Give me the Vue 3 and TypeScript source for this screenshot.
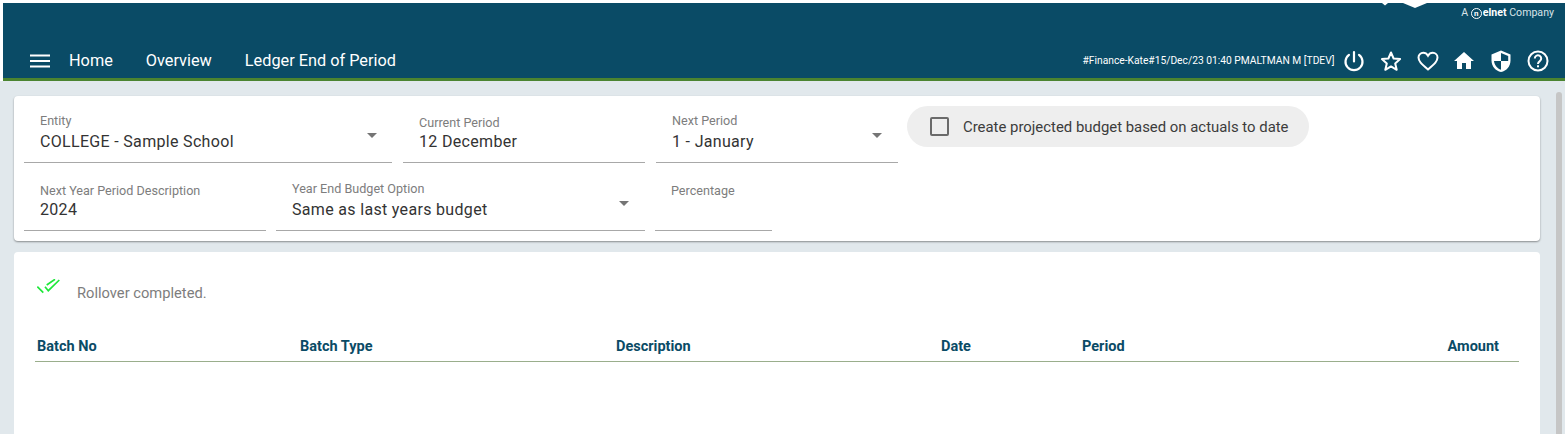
<script setup lang="ts">
const columns = [
  { label: 'Batch No', width: 263 },
  { label: 'Batch Type', width: 316 },
  { label: 'Description', width: 325 },
  { label: 'Date', width: 141 },
  { label: 'Period', width: 0 },
]
</script>

<template>
  <div class="page">
    <header class="topbar">
      <div class="brand-row">
        <svg class="logo-mark" viewBox="0 0 60 8" aria-hidden="true"><path d="M0 0h6l-3 2.500zM21 0h24l-12 5z" fill="#fff" /></svg>
        <div class="tagline">A <span class="nelnet"><span class="nel-n">n</span>elnet</span> Company</div>
      </div>
      <nav class="nav-row">
        <svg class="menu-icon" viewBox="0 0 20 14" aria-hidden="true"><path d="M0 1.500h20M0 7h20M0 12.500h20" stroke="#fff" stroke-width="2" /></svg>
        <a class="nav-link">Home</a>
        <a class="nav-link">Overview</a>
        <a class="nav-link">Ledger End of Period</a>
        <span class="status">#Finance-Kate#15/Dec/23 01:40 PMALTMAN M [TDEV]</span>
        <div class="actions">
          <svg viewBox="0 0 24 24" aria-hidden="true"><path d="M12 3v9.500M7 5.800a8.500 8.500 0 1 0 10 0" fill="none" stroke="#fff" stroke-width="2.200" stroke-linecap="round" /></svg>
          <svg viewBox="0 0 24 24" aria-hidden="true"><path d="M12 3.500l2.600 6 6.500.6-4.900 4.300 1.500 6.400L12 17.400l-5.700 3.400 1.500-6.400-4.900-4.300 6.500-.6z" fill="none" stroke="#fff" stroke-width="2" stroke-linejoin="round" /></svg>
          <svg viewBox="0 0 24 24" aria-hidden="true"><path d="M12 20.500C5 14.500 2.500 12 2.500 8.500 2.500 5.700 4.700 3.800 7.200 3.800c2 0 3.700 1 4.800 2.900 1.100-1.900 2.800-2.900 4.800-2.900 2.500 0 4.700 1.900 4.700 4.700 0 3.500-2.500 6-9.500 12z" fill="none" stroke="#fff" stroke-width="2" /></svg>
          <svg viewBox="0 0 24 24" aria-hidden="true"><path d="M10 20v-6h4v6h5v-8h3L12 3 2 12h3v8z" fill="#fff" /></svg>
          <svg viewBox="0 0 24 24" aria-hidden="true"><path d="M12 1.500L2.500 5.500v6c0 5.800 4 10.500 9.500 11.500 5.500-1 9.500-5.700 9.500-11.500v-6z" fill="#fff" /><path d="M12 3.900l7.200 3V12H12zM12 12v8.700c-3.700-1.100-6.500-4.600-7-8.700z" fill="#0a4b66" /></svg>
          <svg viewBox="0 0 24 24" aria-hidden="true"><circle cx="12" cy="12" r="9.500" fill="none" stroke="#fff" stroke-width="2" /><path d="M8.800 9.500a3.200 3.200 0 1 1 5 2.600c-1.200.9-1.800 1.500-1.800 2.900" fill="none" stroke="#fff" stroke-width="2" /><rect x="11" y="16.300" width="2" height="2" fill="#fff" /></svg>
        </div>
      </nav>
    </header>

    <main class="content">
      <section class="card form-card">
        <div class="form-row">
          <div class="field entity">
            <span class="label">Entity</span>
            <span class="value">COLLEGE - Sample School</span>
            <i class="caret" />
          </div>
          <div class="field plain current">
            <span class="label">Current Period</span>
            <span class="value">12 December</span>
          </div>
          <div class="field next">
            <span class="label">Next Period</span>
            <span class="value">1 - January</span>
            <i class="caret" />
          </div>
          <label class="pill">
            <span class="checkbox" />
            <span>Create projected budget based on actuals to date</span>
          </label>
        </div>
        <div class="form-row second">
          <div class="field plain description">
            <span class="label">Next Year Period Description</span>
            <span class="value">2024</span>
          </div>
          <div class="field option">
            <span class="label">Year End Budget Option</span>
            <span class="value">Same as last years budget</span>
            <i class="caret" />
          </div>
          <div class="field plain percentage">
            <span class="label">Percentage</span>
            <span class="value">&nbsp;</span>
          </div>
        </div>
      </section>

      <section class="card result-card">
        <div class="notice">
          <svg class="check" viewBox="0 0 24 16" aria-hidden="true"><path d="M.3 7.700l6 6M8 7.700l3.300 4L22.300 1M9.700 6L18 .3" fill="none" stroke="#1ee83a" stroke-width="1.700" /></svg>
          <span>Rollover completed.</span>
        </div>
        <div class="table-head">
          <span v-for="column in columns" :key="column.label" class="col" :style="{ width: column.width ? column.width + 'px' : 'auto' }">{{ column.label }}</span>
          <span class="col amount">Amount</span>
        </div>
      </section>
    </main>
    <div class="scrollbar" />
  </div>
</template>

<style>
html, body { margin: 0; background: #fff; overflow: hidden; }
</style>

<style scoped>
.page { position: relative; width: 1565px; height: 434px; overflow: hidden; padding: 3px 0 0 3px; box-sizing: border-box; background: #fff; font-family: Roboto, "Liberation Sans", sans-serif; }
.topbar { height: 75px; background: #0a4b66; border-bottom: 3px solid #4b8430; display: flex; flex-direction: column; color: #fff; }
.brand-row { height: 40px; position: relative; }
.logo-mark { position: absolute; left: 1379px; top: 0; width: 60px; height: 8px; }
.tagline { position: absolute; right: 11px; top: 4px; font-size: 10.600px; color: #d8e3e8; line-height: 12px; }
.nelnet { font-weight: 700; color: #fff; }
.nel-n { display: inline-block; width: 11px; height: 11px; line-height: 10px; border: 1px solid #fff; border-radius: 50%; text-align: center; box-sizing: border-box; font-size: 8px; margin-right: 1px; }
.nav-row { display: flex; align-items: center; height: 35px; }
.menu-icon { width: 20px; height: 14px; margin-left: 27px; margin-right: 19px; }
.nav-link { font-size: 16.300px; margin-right: 33px; color: #fff; }
.status { margin-left: auto; font-size: 10.250px; color: #fff; white-space: nowrap; }
.actions { display: flex; align-items: center; gap: 12.800px; margin: 0 15px 0 7.500px; }
.actions svg { width: 24px; height: 24px; }
.content { background: #e1e8ec; margin-left: -3px; height: 353px; padding: 15px 25px 0 14px; box-sizing: border-box; }
.card { background: #fff; border-radius: 4px; }
.form-card { height: 145px; box-shadow: 0 1px 2px rgba(0,0,0,.4); padding: 10px 10px 0; box-sizing: border-box; }
.form-row { display: flex; gap: 11px; height: 57px; }
.form-row.second { margin-top: 11px; gap: 10px; }
.field { position: relative; display: flex; flex-direction: column; border-bottom: 1px solid #a8a8a8; padding: 8px 0 0 16px; box-sizing: border-box; height: 57px; }
.label { font-size: 12.600px; line-height: 14px; color: #7d7d7d; }
.value { font-size: 16px; line-height: 22px; margin-top: 3px; color: #333; letter-spacing: .32px; }
.plain { padding-top: 10px; }
.plain .value { margin-top: 1px; }
.caret { position: absolute; right: 16px; top: 27px; width: 0; height: 0; border: 5px solid transparent; border-top-color: #757575; border-bottom: 0; }
.entity .caret { right: 15px; }
.entity { width: 368px; }
.current { width: 242px; }
.next { width: 242px; }
.description { width: 242px; }
.option { width: 369px; }
.percentage { width: 117px; }
.pill { display: flex; align-items: center; gap: 14px; height: 41px; margin: 0 0 0 -2px; padding: 0 20px 0 23px; border-radius: 21px; background: #eeeeee; font-size: 14.900px; color: #3c3c3c; }
.checkbox { width: 15px; height: 15px; border: 2px solid #6a6a6a; border-radius: 2px; }
.result-card { margin-top: 11px; height: 190px; padding: 0 21px; }
.notice { display: flex; align-items: center; height: 83px; padding-bottom: 2px; box-sizing: border-box; font-size: 14.700px; color: #7d7d7d; }
.check { width: 24px; height: 16px; margin: -12px 16px 0 2px; }
.table-head { display: flex; height: 26px; padding-left: 2px; border-bottom: 1px solid #9aae8c; font-size: 14.500px; font-weight: 700; color: #0a4b66; }
.col { display: block; line-height: 24px; }
.amount { margin-left: auto; margin-right: 20px; }
.scrollbar { position: absolute; left: 1556px; top: 92px; width: 6px; height: 342px; background: #c6c6c6; border-radius: 3px 3px 0 0; }
</style>
